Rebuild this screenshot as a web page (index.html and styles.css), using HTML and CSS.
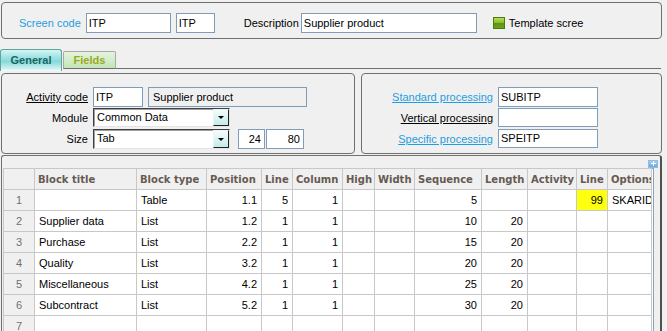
FILE: index.html
```html
<!DOCTYPE html>
<html>
<head>
<meta charset="utf-8">
<link rel="stylesheet" href="styles.css">
</head>
<body>
<div class="top">
  <span class="lbl blue">Screen code</span>
  <div class="inp w85 ml5">ITP</div>
  <div class="inp w39 ml5">ITP</div>
  <span class="lbl ml29">Description</span>
  <div class="inp w176 ml2">Supplier product</div>
  <span class="chk"></span>
  <span class="lbl ml4">Template scree</span>
</div>

<div class="tabs">
  <div class="tab active">General</div>
  <div class="tab other">Fields</div>
  <div class="tabfill"></div>
</div>

<div class="panels">
  <div class="panel pleft">
    <div class="frow r1">
      <span class="flabel ul">Activity code</span>
      <div class="inp w50">ITP</div>
      <div class="inp dis w159 ml5">Supplier product</div>
    </div>
    <div class="frow r2">
      <span class="flabel">Module</span>
      <div class="sel w137"><span class="seltext">Common Data</span><span class="selbtn"><span class="tri"></span></span></div>
    </div>
    <div class="frow r3">
      <span class="flabel">Size</span>
      <div class="sel w137"><span class="seltext">Tab</span><span class="selbtn"><span class="tri"></span></span></div>
      <div class="inp num w27 ml8">24</div>
      <div class="inp num w38 ml1">80</div>
    </div>
  </div>
  <div class="panel pright">
    <div class="frow r1">
      <span class="flabel2 blue ul">Standard processing</span>
      <div class="inp w100">SUBITP</div>
    </div>
    <div class="frow r2b">
      <span class="flabel2 ul">Vertical processing</span>
      <div class="inp w100"></div>
    </div>
    <div class="frow r3b">
      <span class="flabel2 blue ul">Specific processing</span>
      <div class="inp w100">SPEITP</div>
    </div>
  </div>
</div>

<div class="gridpanel">
  <span class="gicon"><span class="gplus"></span></span>
  <div class="gridbox">
    <table class="grid">
      <colgroup>
        <col style="width:31px"><col style="width:102px"><col style="width:70px"><col style="width:55px"><col style="width:31px"><col style="width:50px"><col style="width:32px"><col style="width:40px"><col style="width:67px"><col style="width:46px"><col style="width:49px"><col style="width:31px"><col style="width:44px">
      </colgroup>
      <thead>
        <tr><th class="rn"></th><th>Block title</th><th>Block type</th><th>Position</th><th>Line</th><th>Column</th><th>High</th><th>Width</th><th>Sequence</th><th>Length</th><th>Activity</th><th>Line</th><th class="sel-l">Options</th></tr>
      </thead>
      <tbody>
        <tr><td class="rn">1</td><td></td><td>Table</td><td class="n">1.1</td><td class="n">5</td><td class="n">1</td><td></td><td></td><td class="n">5</td><td></td><td></td><td class="n hl">99</td><td class="sel-l">SKARID</td></tr>
        <tr><td class="rn">2</td><td>Supplier data</td><td>List</td><td class="n">1.2</td><td class="n">1</td><td class="n">1</td><td></td><td></td><td class="n">10</td><td class="n">20</td><td></td><td></td><td></td></tr>
        <tr><td class="rn">3</td><td>Purchase</td><td>List</td><td class="n">2.2</td><td class="n">1</td><td class="n">1</td><td></td><td></td><td class="n">15</td><td class="n">20</td><td></td><td></td><td></td></tr>
        <tr><td class="rn">4</td><td>Quality</td><td>List</td><td class="n">3.2</td><td class="n">1</td><td class="n">1</td><td></td><td></td><td class="n">20</td><td class="n">20</td><td></td><td></td><td></td></tr>
        <tr><td class="rn">5</td><td>Miscellaneous</td><td>List</td><td class="n">4.2</td><td class="n">1</td><td class="n">1</td><td></td><td></td><td class="n">25</td><td class="n">20</td><td></td><td></td><td></td></tr>
        <tr><td class="rn">6</td><td>Subcontract</td><td>List</td><td class="n">5.2</td><td class="n">1</td><td class="n">1</td><td></td><td></td><td class="n">30</td><td class="n">20</td><td></td><td></td><td></td></tr>
        <tr><td class="rn">7</td><td></td><td></td><td></td><td></td><td></td><td></td><td></td><td></td><td></td><td></td><td></td><td></td></tr>
      </tbody>
    </table>
  </div>
</div>
</body>
</html>
```
FILE: styles.css
```css
* { box-sizing: border-box; }
html, body { margin: 0; padding: 0; background: #f0f0f0; overflow: hidden; }
body {
  width: 667px; height: 331px;
  font-family: "Liberation Sans", Arial, sans-serif;
  font-size: 11px; color: #000;
}

.blue { color: #1e9ee2; }
.ul { text-decoration: underline; }
.ml1 { margin-left: 1px; }
.ml2 { margin-left: 2px; }
.ml4 { margin-left: 4px; }
.ml5 { margin-left: 5px; }
.ml8 { margin-left: 8px; }
.ml29 { margin-left: 29px; }
.w27 { width: 27px; }
.w38 { width: 38px; }
.w39 { width: 39px; }
.w50 { width: 50px; }
.w85 { width: 85px; }
.w100 { width: 100px; }
.w137 { width: 137px; }
.w159 { width: 159px; }
.w176 { width: 176px; }

/* top header panel */
.top {
  margin: 2px 0 0 1px;
  width: 661px; height: 37px;
  border: 1px solid #6f6f6f; border-radius: 4px;
  display: flex; align-items: flex-start;
  padding: 10px 0 0 17px;
}
.lbl { display: block; height: 20px; line-height: 20px; white-space: nowrap; }

.inp {
  height: 20px;
  border: 1px solid #7f9db9;
  background: #fff;
  padding: 0 2px;
  line-height: 18px;
  white-space: nowrap; overflow: hidden;
}
.inp.dis { background: #f0f0f0; padding-left: 4px; }
.inp.num { text-align: right; padding-right: 3px; }

.chk {
  display: block; width: 12px; height: 12px;
  margin: 4px 0 0 16px;
  border: 1px solid #4c7a0c;
  background: linear-gradient(#b6dc5c 0%, #8cc02a 45%, #5e9412 55%, #6ea01a 100%);
}

/* tabs */
.tabs {
  display: flex; align-items: flex-start;
  width: 661px; height: 22px;
  margin-top: 10px;
}
.tab { font-weight: bold; text-align: center; }
.tab.active {
  width: 62px; height: 22px;
  border: 1px solid #5aa898; border-bottom: none;
  border-radius: 3px 3px 0 0;
  background: linear-gradient(#d8f4f4 0%, #9fe2e4 35%, #86dadd 55%, #c8eeee 85%, #f2fbfb 100%);
  color: #17665f;
  line-height: 21px;
}
.tab.other {
  width: 53px; height: 18px;
  margin: 2px 0 0 1px;
  border: 1px solid #a8a8a8; border-bottom: 1px solid #6f6f6f;
  border-radius: 2px 2px 0 0;
  background: linear-gradient(#e4f4dc, #c2e6b8);
  color: #9ca81e;
  line-height: 16px;
}
.tabfill { flex: 1; height: 20px; border-bottom: 1px solid #6f6f6f; }

/* field panels */
.panels { display: flex; margin-top: 2px; }
.panel {
  height: 81px;
  border: 1px solid #6f6f6f; border-radius: 4px;
  padding-top: 13px;
}
.pleft { margin-left: 1px; width: 354px; }
.pright { margin-left: 6px; width: 301px; }

.frow { display: flex; align-items: center; }
.frow.r1 { height: 20px; }
.frow.r2 { height: 19px; margin-top: 1px; }
.frow.r3 { height: 20px; margin-top: 2px; }
.frow.r2b { height: 19px; margin-top: 1px; }
.frow.r2b .inp, .frow.r3b .inp { height: 19px; line-height: 17px; }
.frow.r3b { height: 19px; margin-top: 2px; }

.flabel { width: 86px; text-align: right; margin-right: 5px; white-space: nowrap; }
.flabel2 { width: 131px; text-align: right; margin-right: 5px; white-space: nowrap; }

.sel {
  height: 100%;
  display: flex;
  border: 1px solid #e4e4e4;
  border-top-color: #404040; border-left-color: #404040;
  background: #fff;
  box-shadow: inset 1px 1px 0 #a0a0a0;
}
.seltext { flex: 1; padding-left: 3px; line-height: 17px; }
.selbtn {
  width: 16px; height: 100%;
  border: 1px solid #202020; border-top-color: #e8f6f6; border-left-color: #e8f6f6;
  background: linear-gradient(#f4fbfb, #c4ecea);
  display: flex; align-items: center; justify-content: center;
}
.tri {
  width: 0; height: 0;
  border-left: 3px solid transparent; border-right: 3px solid transparent;
  border-top: 3px solid #000;
}

/* grid */
.gridpanel {
  position: relative;
  margin: 1px 0 0 1px;
  width: 661px; height: 200px;
  border: 1px solid #6f6f6f; border-right: 2px solid #505050;
  border-radius: 3px 3px 0 0;
  padding: 12px 0 0 1px;
}
.gicon {
  position: absolute; left: 646px; top: 4px;
  width: 10px; height: 8px;
  background: linear-gradient(#a8d0ee, #6ea8d8);
  border: 1px solid #8cbce4;
}
.gplus::before, .gplus::after {
  content: ""; position: absolute; background: #fff;
}
.gplus::before { left: 2px; top: 2px; width: 5px; height: 1px; }
.gplus::after { left: 4px; top: 0px; width: 1px; height: 5px; }

.gridbox {
  width: 651px; height: 200px;
  border: 1px solid #8ba2bc; border-bottom: none;
  background: #fff;
}
.grid {
  border-collapse: collapse;
  table-layout: fixed;
  width: 648px;
  margin: -1px 0 0 -1px;
}
.grid th, .grid td {
  height: 21px;
  border: 1px solid #c8c8c8;
  padding: 0 4px 0 4px;
  white-space: nowrap; overflow: hidden;
  text-align: left;
}
.grid th {
  background: #f0f0f0;
  font-family: "DejaVu Sans", Verdana, sans-serif;
  font-weight: bold; font-size: 10px;
  color: #675a52;
  padding-left: 3px;
}
.grid td { background: #fff; }
.grid td.rn { background: #f0f0f0; color: #707070; text-align: center; }
.grid td.n { text-align: right; }
.grid td.hl { background: #ffff10; }
.grid .sel-l { border-left: 1px solid #303030; }
```
